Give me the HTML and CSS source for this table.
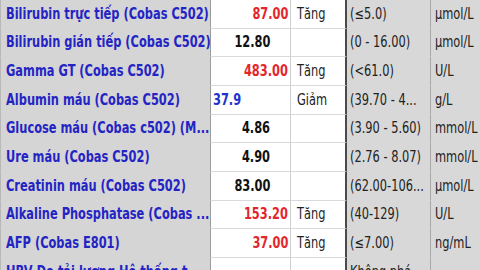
FILE: index.html
```html
<!DOCTYPE html>
<html lang="vi">
<head>
<meta charset="utf-8">
<title>Kết quả xét nghiệm</title>
<link rel="stylesheet" href="styles.css">
</head>
<body>
<div class="table">
  <div class="row">
    <div class="c name"><span class="t">Bilirubin trực tiếp (Cobas C502)</span></div>
    <div class="c res hi"><span class="t r">87.00</span></div>
    <div class="c flag"><span class="t">Tăng</span></div>
    <div class="c range"><span class="t">(≤5.0)</span></div>
    <div class="c unit"><span class="t">µmol/L</span></div>
  </div>
  <div class="row">
    <div class="c name"><span class="t">Bilirubin gián tiếp (Cobas C502)</span></div>
    <div class="c res ok"><span class="t r">12.80</span></div>
    <div class="c flag"></div>
    <div class="c range"><span class="t">(0 - 16.00)</span></div>
    <div class="c unit"><span class="t">µmol/L</span></div>
  </div>
  <div class="row">
    <div class="c name"><span class="t">Gamma GT (Cobas C502)</span></div>
    <div class="c res hi"><span class="t r">483.00</span></div>
    <div class="c flag"><span class="t">Tăng</span></div>
    <div class="c range"><span class="t">(&lt;61.0)</span></div>
    <div class="c unit"><span class="t">U/L</span></div>
  </div>
  <div class="row">
    <div class="c name"><span class="t">Albumin máu (Cobas C502)</span></div>
    <div class="c res lo"><span class="t">37.9</span></div>
    <div class="c flag"><span class="t">Giảm</span></div>
    <div class="c range"><span class="t">(39.70 - 4...</span></div>
    <div class="c unit"><span class="t">g/L</span></div>
  </div>
  <div class="row">
    <div class="c name"><span class="t">Glucose máu (Cobas c502) (M...</span></div>
    <div class="c res ok"><span class="t r">4.86</span></div>
    <div class="c flag"></div>
    <div class="c range"><span class="t">(3.90 - 5.60)</span></div>
    <div class="c unit"><span class="t">mmol/L</span></div>
  </div>
  <div class="row">
    <div class="c name"><span class="t">Ure máu (Cobas C502)</span></div>
    <div class="c res ok"><span class="t r">4.90</span></div>
    <div class="c flag"></div>
    <div class="c range"><span class="t">(2.76 - 8.07)</span></div>
    <div class="c unit"><span class="t">mmol/L</span></div>
  </div>
  <div class="row">
    <div class="c name"><span class="t">Creatinin máu (Cobas C502)</span></div>
    <div class="c res ok"><span class="t r">83.00</span></div>
    <div class="c flag"></div>
    <div class="c range"><span class="t">(62.00-106...</span></div>
    <div class="c unit"><span class="t">µmol/L</span></div>
  </div>
  <div class="row">
    <div class="c name"><span class="t">Alkaline Phosphatase (Cobas ...</span></div>
    <div class="c res hi"><span class="t r">153.20</span></div>
    <div class="c flag"><span class="t">Tăng</span></div>
    <div class="c range"><span class="t">(40-129)</span></div>
    <div class="c unit"><span class="t">U/L</span></div>
  </div>
  <div class="row">
    <div class="c name"><span class="t">AFP (Cobas E801)</span></div>
    <div class="c res hi"><span class="t r">37.00</span></div>
    <div class="c flag"><span class="t">Tăng</span></div>
    <div class="c range"><span class="t">(≤7.00)</span></div>
    <div class="c unit"><span class="t">ng/mL</span></div>
  </div>
  <div class="row last">
    <div class="c name"><span class="t">HBV Đo tải lượng Hệ thống t...</span></div>
    <div class="c res ok"></div>
    <div class="c flag"></div>
    <div class="c range"><span class="t">Không phá...</span></div>
    <div class="c unit"></div>
  </div>
</div>
</body>
</html>
```
FILE: styles.css
```css
html, body {
  margin: 0;
  padding: 0;
  width: 480px;
  height: 270px;
  overflow: hidden;
  background: #ffffff;
}

.table {
  display: flex;
  flex-direction: column;
  font-family: "DejaVu Sans", sans-serif;
  font-size: 15px;
  color: #222222;
}

.row {
  display: grid;
  grid-template-columns: 211px 80px 56px 84px 49px;
  height: 28.67px;
  flex: none;
}

.c {
  box-sizing: border-box;
  display: flex;
  align-items: center;
  overflow: hidden;
  white-space: nowrap;
  border-bottom: 1px solid #dadada;
}

.t {
  display: inline-block;
  transform: scaleX(0.76);
  transform-origin: left center;
}

.t.r {
  transform-origin: right center;
}

.name {
  background: #d5d5d5;
  border-bottom-color: #d5d5d5;
  border-left: 1px solid #b8b8b8;
  border-right: 1px solid #9c9c9c;
  padding-left: 5px;
  color: #2424c4;
  font-weight: bold;
}

.res {
  border-right: 1px solid #cfcfcf;
  font-weight: bold;
  justify-content: flex-end;
}

.res.hi {
  color: #e3262d;
  padding-right: 2px;
}

.res.ok {
  color: #111111;
  padding-right: 20px;
}

.res.lo {
  color: #2233cc;
  justify-content: flex-start;
  padding-left: 2px;
}

.flag {
  border-right: 2px solid #4a4a4a;
  padding-left: 6px;
}

.range {
  background: #d8d8d8;
  border-bottom-color: #d8d8d8;
  border-right: 1px solid #a8a8a8;
  padding-left: 3px;
}

.unit {
  background: #d8d8d8;
  border-bottom-color: #d8d8d8;
  padding-left: 4px;
}

.last .c {
  align-items: flex-start;
  padding-top: 5px;
}
```
